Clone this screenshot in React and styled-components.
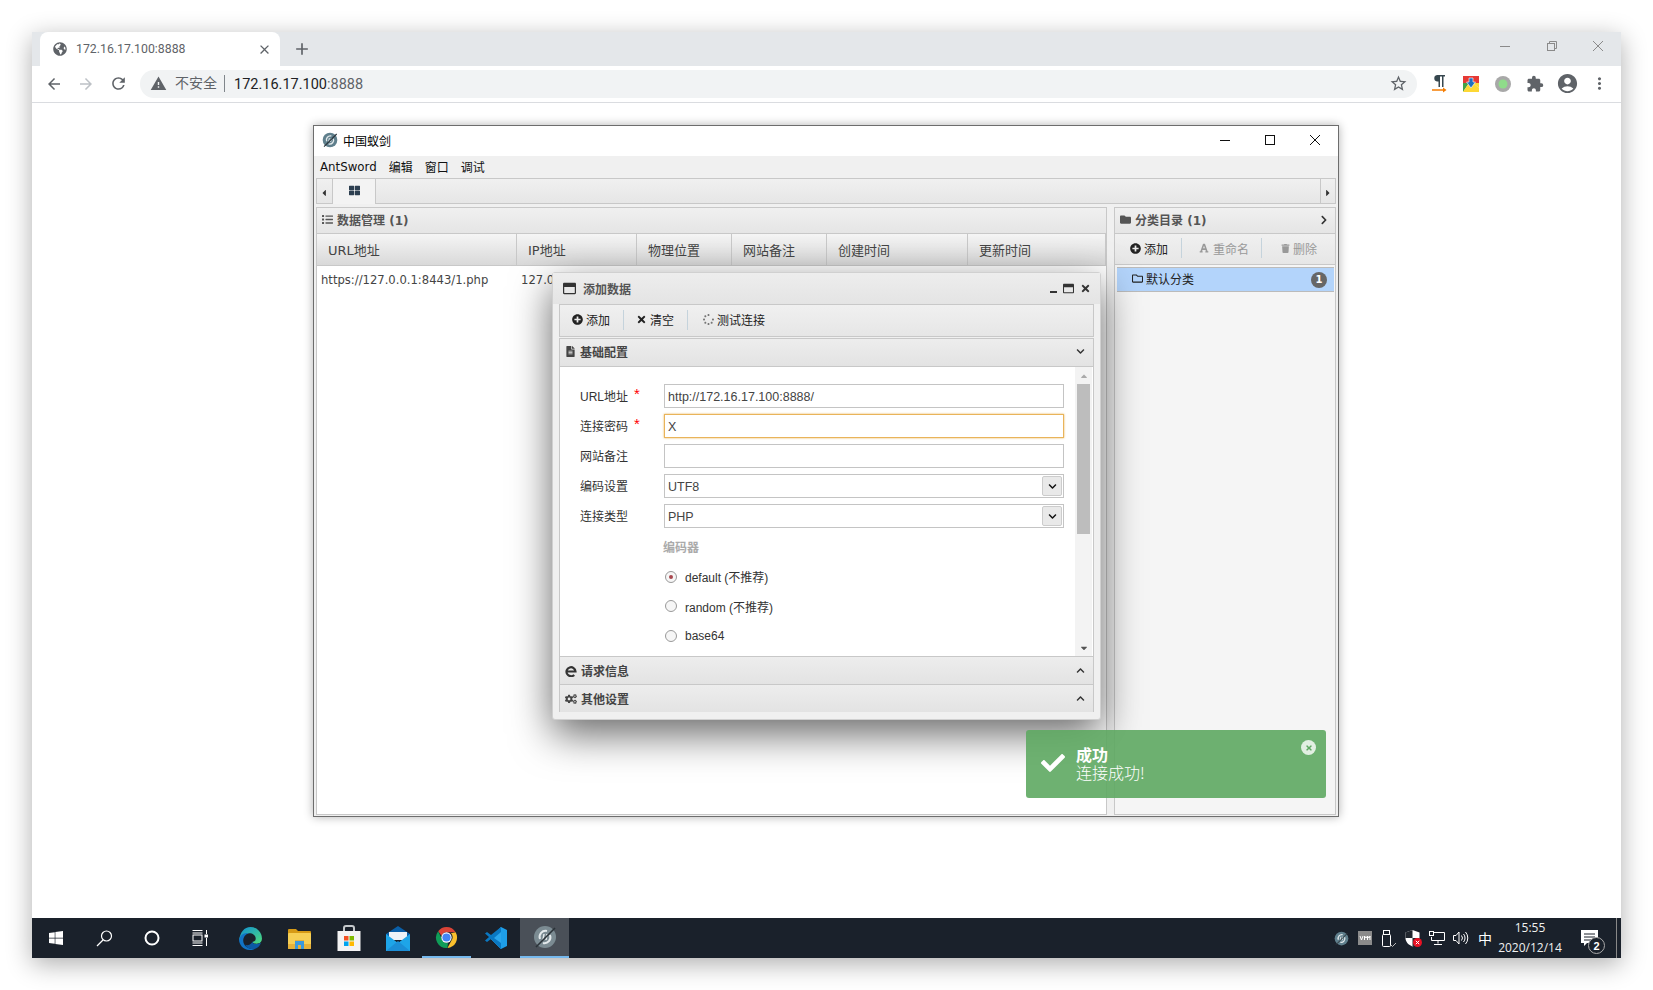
import React from 'react'
import styled, { createGlobalStyle } from 'styled-components'
import {
  FaPlusCircle, FaTimes, FaSpinner, FaFileAlt, FaChevronDown, FaChevronUp, FaChevronRight,
  FaCogs, FaThLarge, FaList, FaFolder, FaRegFolder, FaFont, FaTrash,
  FaCheck, FaCaretLeft, FaCaretRight, FaCaretUp, FaCaretDown, FaRegWindowMaximize, FaWindows,
  FaGlobeAmericas,
} from 'react-icons/fa'
import {
  MdArrowBack, MdArrowForward, MdRefresh, MdWarning, MdStarBorder, MdExtension,
  MdAccountCircle, MdMoreVert, MdClose, MdAdd,
} from 'react-icons/md'

const UI = '"DejaVu Sans", "Noto Sans CJK SC", sans-serif'
const CHROME = 'Roboto, "Noto Sans CJK SC", sans-serif'

const GlobalStyle = createGlobalStyle`
  html, body { margin: 0; padding: 0; background: #fff; overflow: hidden; }
  * { box-sizing: border-box; }
`

const Page = styled.div`
  width: 1653px;
  height: 990px;
  padding: 32px 0 0 32px;
`
const Browser = styled.div`
  width: 1589px;
  height: 926px;
  display: flex;
  flex-direction: column;
  background: #fff;
  box-shadow: 0 6px 24px rgba(0, 0, 0, 0.32);
`
const TabStrip = styled.div`
  height: 34px;
  flex: none;
  display: flex;
  align-items: flex-end;
  background: #e4e7ea;
  padding-left: 8px;
  color: #5f6368;
  font-family: ${CHROME};
`
const Tab = styled.div`
  width: 240px;
  height: 34px;
  background: #fff;
  border-radius: 8px 8px 0 0;
  display: flex;
  align-items: center;
  padding: 0 8px 0 13px;
  font-size: 12.3px;
  color: #5f6368;
`
const TabTitle = styled.span`
  flex: 1;
  margin-left: 9px;
`
const NewTab = styled.div`
  display: flex;
  width: 44px;
  height: 34px;
  align-items: center;
  justify-content: center;
`
const WinButtons = styled.div`
  margin-left: auto;
  height: 34px;
  display: flex;
  align-items: flex-start;
  padding: 9px 18px 0 0;
  gap: 36.5px;
`
const Toolbar = styled.div`
  height: 37px;
  flex: none;
  display: flex;
  align-items: center;
  padding: 0 0 1px 6px;
  border-bottom: 1px solid #dadce0;
  color: #5f6368;
`
const NavBtn = styled.div`
  width: 32px;
  flex: none;
  display: flex;
  justify-content: center;
  color: ${p => (p.$off ? '#bdc1c6' : '#5f6368')};
`
const Omnibox = styled.div`
  width: 1277px;
  flex: none;
  height: 28px;
  margin-left: 6px;
  border-radius: 14px;
  background: #f1f3f4;
  display: flex;
  align-items: center;
  padding: 0 9px 0 10px;
  font-family: ${CHROME};
  font-size: 14px;
  color: #5f6368;
`
const Insecure = styled.span`
  margin-left: 8px;
  padding-right: 7px;
  border-right: 1px solid #80868b;
  line-height: 17px;
`
const Url = styled.span`
  margin-left: 9px;
  padding-top: 1px;
  color: #202124;
  flex: 1;
  font-size: 14.5px;
`
const UrlPort = styled.span`
  color: #5f6368;
`
const Extensions = styled.div`
  display: flex;
  align-items: center;
  margin-left: 6px;
`
const ExtSlot = styled.div`
  width: 32px;
  display: flex;
  justify-content: center;
  align-items: center;
`
const Viewport = styled.div`
  flex: 1;
  min-height: 0;
  padding: 22px 0 0 281px;
`

const AppWindow = styled.div`
  position: relative;
  width: 1026px;
  height: 692px;
  border: 1px solid #6d6d6d;
  background: #f0f0f0;
  display: flex;
  flex-direction: column;
  box-shadow: 0 0 9px rgba(0, 0, 0, 0.3);
  font-family: ${UI};
  font-size: 12px;
  color: #333;
`
const TitleBar = styled.div`
  height: 30px;
  flex: none;
  background: #fff;
  display: flex;
  align-items: center;
  padding: 0 1px 2px 8px;
  color: #000;
`
const TitleText = styled.span`
  margin-left: 5px;
  flex: 1;
`
const SysBtn = styled.div`
  width: 45px;
  display: flex;
  justify-content: center;
`
const MenuBar = styled.div`
  height: 22px;
  flex: none;
  display: flex;
  align-items: center;
  gap: 12px;
  padding: 0 0 1px 6px;
  color: #111;
`
const MenuLatin = styled.span`
  font-size: 11.8px;
`
const Workspace = styled.div`
  flex: 1;
  min-height: 0;
  display: flex;
  flex-direction: column;
  padding: 0 2px 1px 2px;
`
const TabBar = styled.div`
  height: 26px;
  flex: none;
  display: flex;
  border: 1px solid #c8c8c8;
  background: linear-gradient(#f0f0f0, #e6e6e6);
  margin-bottom: 3px;
`
const Scroller = styled.div`
  width: 15px;
  flex: none;
  display: flex;
  align-items: center;
  justify-content: center;
  padding: 3px ${p => (p.$right ? 0 : 2)}px 0 0;
  font-size: 10px;
  color: #333;
  border-left: ${p => (p.$right ? '1px solid #c8c8c8' : '0')};
  margin-left: ${p => (p.$right ? 'auto' : '0')};
`
const WorkTab = styled.div`
  width: 44px;
  height: 25px;
  background: #f3f3f3;
  border: 1px solid #c8c8c8;
  border-width: 0 1px;
  display: flex;
  align-items: flex-start;
  padding-top: 6px;
  justify-content: center;
  font-size: 11px;
  color: #2c3e50;
`
const Panels = styled.div`
  flex: 1;
  min-height: 0;
  display: flex;
`
const LeftPanel = styled.div`
  width: 791px;
  display: flex;
  flex-direction: column;
  background: #fff;
  border: 1px solid #c8c8c8;
  border-top: 0;
`
const RightPanel = styled.div`
  width: 222px;
  margin-left: 7px;
  display: flex;
  flex-direction: column;
  background: #f5f5f5;
  border: 1px solid #c8c8c8;
  border-top: 0;
`
const PanelHead = styled.div`
  height: 27px;
  flex: none;
  display: flex;
  align-items: center;
  gap: 4px;
  padding: 0 6px 2px 5px;
  font-weight: 700;
  color: #555;
  background: linear-gradient(#f0f0f0, #e5e5e5);
  border-top: 1px solid #c8c8c8;
  border-bottom: 1px solid #c8c8c8;
`
const HeadEnd = styled.span`
  margin-left: auto;
  display: flex;
  color: #333;
`
const GridHead = styled.div`
  height: 32px;
  flex: none;
  display: grid;
  grid-template-columns: 200px 120px 95px 95px 141px 1fr;
  background: linear-gradient(#f5f5f5, #d9d9d9);
  border-bottom: 1px solid #c8c8c8;
  font-size: 13px;
  color: #444;
`
const HeadCell = styled.div`
  display: flex;
  align-items: center;
  padding-left: 11px;
  border-right: 1px solid #c8c8c8;
`
const GridRow = styled.div`
  display: grid;
  grid-template-columns: 200px 120px;
  height: 27px;
  align-items: center;
  font-size: 11.6px;
  color: #444;
`
const RowCell = styled.div`
  padding-left: 4px;
  white-space: nowrap;
  overflow: hidden;
`
const BarTools = styled.div`
  height: 31px;
  flex: none;
  display: flex;
  align-items: center;
  background: linear-gradient(#f0f0f0, #e6e6e6);
  border-bottom: 1px solid #c8c8c8;
  padding: 0 0 2px ${p => p.$pad || 0}px;
`
const ToolBtn = styled.div`
  display: flex;
  align-items: center;
  gap: ${p => p.$gap || 3}px;
  color: ${p => (p.$off ? '#999' : '#222')};
  padding-right: ${p => p.$pr}px;
  margin-right: ${p => p.$mr}px;
  height: 20px;
  border-right: ${p => (p.$last ? '0' : '1px solid #c5d3dc')};
`
const CategoryRow = styled.div`
  height: 25px;
  margin: 2px 1px 0 2px;
  background: #b3d4fb;
  border: 1px solid #bbb;
  border-width: 1px 0;
  display: flex;
  align-items: center;
  padding: 0 7px 2px 15px;
  gap: 3px;
  color: #222;
`
const Badge = styled.span`
  margin: 2px 0 0 auto;
  width: 16px;
  height: 16px;
  border-radius: 50%;
  background: #666;
  color: #fff;
  font-size: 10px;
  font-weight: 700;
  display: flex;
  align-items: center;
  justify-content: center;
`

const Dialog = styled.div`
  position: absolute;
  left: 238px;
  top: 146px;
  width: 549px;
  height: 448px;
  border: 1px solid #d0d0d0;
  border-radius: 3px;
  background: #f0f0f0;
  display: flex;
  flex-direction: column;
  padding: 0 6px 7px;
  box-shadow: 0 14px 40px rgba(0, 0, 0, 0.6);
`
const DialogTitle = styled.div`
  height: 31px;
  flex: none;
  margin: 0 -6px;
  padding: 0 9px 0 10px;
  display: flex;
  align-items: center;
  color: #555;
  font-weight: 700;
  background: linear-gradient(#ededed, #e4e4e4);
`
const DialogName = styled.span`
  margin-left: 7px;
  flex: 1;
`
const DialogBtns = styled.div`
  display: flex;
  align-items: center;
  gap: 6px;
  color: #333;
`
const MinBar = styled.span`
  width: 7px;
  height: 2px;
  margin-top: 6px;
  background: #333;
`
const DialogTools = styled(BarTools)`
  height: 33px;
  flex: none;
  border: 1px solid #c8c8c8;
  margin-bottom: 1px;
  padding-left: 12px;
`
const Accordion = styled.div`
  flex: 1;
  min-height: 0;
  display: flex;
  flex-direction: column;
  border: 1px solid #c8c8c8;
  border-top: 0;
  background: #fff;
`
const AccHead = styled.div`
  height: 28px;
  flex: none;
  display: flex;
  align-items: center;
  gap: 4px;
  padding: 0 8px ${p => (p.$low ? 0 : 2)}px 5px;
  color: #444;
  font-weight: 700;
  background: linear-gradient(#ededed, #e3e3e3);
  border-top: 1px solid #c8c8c8;
`
const AccBody = styled.div`
  height: 290px;
  flex: none;
  display: flex;
  border-top: 1px solid #c8c8c8;
`
const FormArea = styled.div`
  flex: 1;
  display: flex;
  flex-direction: column;
  gap: 6px;
  padding: 17px 11px 0 20px;
`
const FormRow = styled.div`
  display: grid;
  grid-template-columns: 84px 1fr;
  height: 24px;
  align-items: center;
`
const Label = styled.div`
  color: #333;
  display: flex;
  padding-bottom: 2px;
  font-family: "Liberation Sans", "Noto Sans CJK SC", sans-serif;
`
const Star = styled.span`
  color: #f00;
  margin-left: 6px;
  font-size: 15px;
  line-height: 14px;
`
const Field = styled.div`
  height: 24px;
  display: flex;
  align-items: center;
  padding: 1px 0 0 3px;
  border: 1px solid ${p => (p.$focus ? '#e9b45a' : '#c4c4c4')};
  box-shadow: ${p => (p.$focus ? '0 0 2px #e9b45a' : 'none')};
  background: #fff;
  color: #444;
  font-family: "Liberation Sans", sans-serif;
  font-size: 12.5px;
`
const SelectBtn = styled.span`
  margin: -1px 1px 0 auto;
  width: 20px;
  height: 20px;
  border: 1px solid #ccc;
  border-radius: 2px;
  background: #e9e9e9;
  display: flex;
  align-items: center;
  justify-content: center;
  font-size: 9px;
  color: #111;
`
const Group = styled.div`
  margin-left: 84px;
  display: flex;
  flex-direction: column;
`
const Legend = styled.div`
  color: #aaa;
  font-weight: 700;
  height: 20px;
  line-height: 20px;
  margin: 4px 0 4px -1px;
`
const RadioRow = styled.div`
  height: 29.5px;
  display: flex;
  align-items: center;
  gap: 8px;
  padding-left: 1px;
  font-family: "Liberation Sans", "Noto Sans CJK SC", sans-serif;
  color: #333;
`
const Radio = styled.span`
  width: 12px;
  height: 12px;
  border-radius: 50%;
  border: 1px solid #999;
  background: #f6f6f6;
  display: flex;
  align-items: center;
  justify-content: center;
  &::after {
    content: '';
    width: 4px;
    height: 4px;
    border-radius: 50%;
    background: ${p => (p.$on ? '#a8474f' : 'transparent')};
  }
`
const ScrollTrack = styled.div`
  width: 17px;
  flex: none;
  background: #f3f3f3;
  display: flex;
  flex-direction: column;
  align-items: center;
  font-size: 10px;
  color: #555;
  margin-right: 1px;
`
const ScrollArrow = styled.div`
  height: 17px;
  display: flex;
  align-items: center;
  color: ${p => (p.$dim ? '#aaa' : '#555')};
`
const ScrollThumb = styled.div`
  width: 13px;
  height: 150px;
  background: #bdbdbd;
  margin-bottom: auto;
`

const Toast = styled.div`
  position: absolute;
  left: 712px;
  top: 604px;
  width: 300px;
  height: 68px;
  border-radius: 3px;
  background: rgba(94, 168, 98, 0.9);
  color: #fff;
  display: flex;
  align-items: center;
  padding: 0 0 3px 15px;
  font-size: 16px;
  line-height: 18px;
`
const ToastText = styled.div`
  margin-left: 11px;
  font-family: "Noto Sans CJK SC", sans-serif;
  font-weight: 300;
`
const ToastTitle = styled.div`
  font-weight: 700;
`
const ToastClose = styled.span`
  position: absolute;
  right: 10px;
  top: 10px;
  width: 15px;
  height: 15px;
  border-radius: 50%;
  background: rgba(255, 255, 255, 0.8);
  color: #5ea862;
  font-size: 8px;
  display: flex;
  align-items: center;
  justify-content: center;
`

const Taskbar = styled.div`
  height: 40px;
  flex: none;
  display: flex;
  align-items: stretch;
  background: #1a212b;
  color: #fff;
`
const TaskSlot = styled.div`
  width: ${p => p.$w || 49}px;
  display: flex;
  align-items: center;
  justify-content: center;
  margin-left: ${p => p.$ml || 0}px;
  background: ${p => (p.$active ? '#4a5058' : 'transparent')};
  border-bottom: ${p => (p.$open ? '2px solid #76b9ed' : '0')};
  color: #fff;
`
const Tray = styled.div`
  margin-left: auto;
  display: flex;
  align-items: center;
  padding-right: 4px;
`
const TraySlot = styled.div`
  width: 24px;
  display: flex;
  justify-content: center;
  font-family: "Noto Sans CJK SC", sans-serif;
  font-size: 14px;
`
const Clock = styled.div`
  width: 66px;
  text-align: center;
  white-space: nowrap;
  font-family: "Open Sans", "Noto Sans CJK SC", sans-serif;
  font-size: 12px;
  line-height: 20px;
  color: #f0f0f0;
`
const Notify = styled.div`
  position: relative;
  width: 54px;
  height: 40px;
  display: flex;
  align-items: center;
  justify-content: center;
  border-right: 1px solid #888;
`
const NotifyCount = styled.span`
  position: absolute;
  left: 25px;
  top: 19px;
  width: 17px;
  height: 17px;
  border-radius: 50%;
  border: 1px solid #aaa;
  background: #1a212b;
  font-family: "Liberation Sans", sans-serif;
  font-size: 11px;
  font-weight: 700;
  display: flex;
  align-items: center;
  justify-content: center;
`

const AntLogo = ({ size = 16, active }) => (
  <svg width={size} height={size} viewBox="0 0 24 24">
    <circle cx="12" cy="12" r="11" fill={active ? '#7b8b92' : '#5f7f8c'} />
    <path d="M7 14a6 6 0 0 1 7-8M17 10a6 6 0 0 1-7 8" fill="none" stroke="#e4eaec" strokeWidth="2" />
    <path d="M11 9l-1 6M14 9l-1 6" stroke="#e4eaec" strokeWidth="1.5" />
    <path d="M3 22L22 3" stroke="#2a3238" strokeWidth="1.6" />
  </svg>
)

const OldEdgeIcon = () => (
  <svg width="12" height="12" viewBox="0 0 12 12" fill="none" stroke="#333" strokeWidth="2.200">
    <path d="M1.500 6.500h9a4.500 4.500 0 1 0-1.300 3.400" />
  </svg>
)
const EdgeIcon = () => (
  <svg width="25" height="25" viewBox="0 0 24 24">
    <defs>
      <linearGradient id="edgeTop" x1="0" y1="0" x2="1" y2="1">
        <stop offset="0" stopColor="#0f8fd6" />
        <stop offset="1" stopColor="#4fdc7a" />
      </linearGradient>
    </defs>
    <path d="M12 1a11 11 0 0 1 11 11c0 3-2 5-5 5-3 0-4-1-4-2 2 0 3-1 3-3 0-3-3-5-6-5-4 0-8 3-10 7C2 6 6 1 12 1z" fill="url(#edgeTop)" />
    <path d="M1 13c1-4 5-7 9-6-3 1-5 4-5 7 0 5 5 9 11 8-2 1-3 1-5 1C5 23 1 18 1 13z" fill="#1173c5" />
    <path d="M14 15c0 2 3 3 5 2 1 0 2-1 3-1-1 3-3 5-6 6-4 1-8-1-9-4 2 1 5 0 7-3z" fill="#0c59a4" />
  </svg>
)
const ExplorerIcon = () => (
  <svg width="23" height="21" viewBox="0 0 23 21">
    <path d="M0 2a1 1 0 0 1 1-1h7l2 2h12a1 1 0 0 1 1 1v3H0z" fill="#d69a16" />
    <rect x="0" y="5" width="23" height="16" rx="1" fill="#f6cf55" />
    <path d="M0 16h7v-4h9v4h7v4a1 1 0 0 1-1 1H1a1 1 0 0 1-1-1z" fill="#e7b23a" />
    <path d="M7 21v-8h9v8h-3v-4h-3v4z" fill="#3b9ade" />
  </svg>
)
const StoreIcon = () => (
  <svg width="24" height="26" viewBox="0 0 24 26">
    <path d="M7 7V3a2 2 0 0 1 2-2h6a2 2 0 0 1 2 2v4" fill="none" stroke="#c5c9cc" strokeWidth="2" />
    <rect x="0.500" y="6" width="23" height="20" fill="#f3f3f3" />
    <rect x="7" y="11" width="4.500" height="4.500" fill="#f25022" />
    <rect x="12.500" y="11" width="4.500" height="4.500" fill="#7fba00" />
    <rect x="7" y="16.500" width="4.500" height="4.500" fill="#00a4ef" />
    <rect x="12.500" y="16.500" width="4.500" height="4.500" fill="#ffb900" />
  </svg>
)
const MailIcon = () => (
  <svg width="24" height="25" viewBox="0 0 24 25">
    <path d="M0 8l12-8 12 8v3H0z" fill="#0a5fa8" />
    <path d="M3 6h18v8H3z" fill="#eef3f7" />
    <path d="M0 8l12 9 12-9v17H0z" fill="#1ea5e8" />
    <path d="M0 25l12-10 12 10z" fill="#1b8ed6" />
  </svg>
)
const ChromeIcon = ({ size = 23 }) => (
  <svg width={size} height={size} viewBox="0 0 24 24">
    <path d="M12 1a11 11 0 0 1 9.530 5.500H12a5.500 5.500 0 0 0-5.200 3.700L3.300 5.400A11 11 0 0 1 12 1z" fill="#db4437" />
    <path d="M21.530 6.500A11 11 0 0 1 13 23l4.200-8a5.500 5.500 0 0 0-.6-7.500z" fill="#fbc02d" />
    <path d="M13 23A11 11 0 0 1 3.300 5.400L7.500 14a5.500 5.500 0 0 0 6 3.500z" fill="#0f9d58" />
    <circle cx="12" cy="12" r="5.400" fill="#fff" />
    <circle cx="12" cy="12" r="4.300" fill="#4285f4" />
  </svg>
)
const CodeIcon = () => (
  <svg width="24" height="24" viewBox="0 0 24 24">
    <path d="M17 1l6 3v16l-6 3-10-10z" fill="#1e9ee8" />
    <path d="M17 1v22L7 13z" fill="#2aa6ec" />
    <path d="M7 13l-4 3-2-1.500L5 11 1 7.500 3 6l4 3 10-8v5l-7 6 7 5v6z" fill="#0a78c2" />
  </svg>
)
const TaskView = () => (
  <svg width="16" height="16" viewBox="0 0 16 16" fill="none" stroke="#fff" strokeWidth="1">
    <path d="M0.500 0.500h10M0.500 15.500h10M0.500 3h10M0.500 13h10" />
    <rect x="1" y="5" width="9" height="6" />
    <path d="M14.500 0v4M14.500 8v8" />
    <rect x="13" y="5" width="3" height="2" fill="#fff" />
  </svg>
)
const SearchGlass = () => (
  <svg width="17" height="17" viewBox="0 0 17 17" fill="none" stroke="#fff" strokeWidth="1.200">
    <circle cx="10.500" cy="6" r="5" />
    <path d="M7 10L1 16" />
  </svg>
)
const Cortana = () => (
  <svg width="16" height="16" viewBox="0 0 16 16" fill="none" stroke="#fff" strokeWidth="2">
    <circle cx="8" cy="8" r="6.500" />
  </svg>
)
const Pilcrow = () => (
  <svg width="16" height="20" viewBox="0 0 16 20">
    <path d="M6 1h8v1.500h-1.500V13H11V2.500H9V13H7.500V7.500H6a3.300 3.300 0 0 1 0-6.500z" fill="#37474f" />
    <path d="M1 16h12" stroke="#f57c00" strokeWidth="1.500" />
    <path d="M12 13.500L15.500 16 12 18.500z" fill="#f57c00" />
  </svg>
)
const ColorExt = () => (
  <svg width="16" height="16" viewBox="0 0 16 16">
    <rect width="16" height="7" fill="#e53935" />
    <path d="M0 7h6L0 16z" fill="#43a047" />
    <path d="M0 16L6 7h4l6 5v4z" fill="#fdd835" />
    <path d="M10 7h6v5z" fill="#fdd835" />
    <path d="M6 2h4v4h2.500L8 12 3.500 6H6z" fill="#1e6fc0" stroke="#fff" strokeWidth="0.600" />
  </svg>
)
const DotExt = () => (
  <svg width="16" height="16" viewBox="0 0 16 16">
    <circle cx="8" cy="8" r="8" fill="#a8a8a8" />
    <circle cx="8" cy="8" r="4.500" fill="#8fdc8a" />
  </svg>
)
const MinLine = ({ c }) => (
  <svg width="10" height="10" viewBox="0 0 10 10"><path d="M0 5.500h10" stroke={c} /></svg>
)
const RestoreIcon = () => (
  <svg width="10" height="10" viewBox="0 0 10 10" fill="none" stroke="#8a8a8a">
    <rect x="0.500" y="2.500" width="7" height="7" />
    <path d="M2.500 2.500v-2h7v7h-2" />
  </svg>
)
const MaxIcon = () => (
  <svg width="10" height="10" viewBox="0 0 10 10" fill="none" stroke="#111">
    <rect x="0.500" y="0.500" width="9" height="9" />
  </svg>
)
const CrossIcon = ({ c }) => (
  <svg width="10" height="10" viewBox="0 0 10 10" fill="none" stroke={c}>
    <path d="M0 0l10 10M10 0L0 10" />
  </svg>
)
const VmIcon = () => (
  <svg width="14" height="14" viewBox="0 0 14 14">
    <rect width="14" height="14" fill="#8b8b8b" />
    <path d="M2 5l1.500 4L5 5M6.500 9V5l1.500 2 1.500-2v4M9.500 5l1.500 2 1-2v4" fill="none" stroke="#fff" />
  </svg>
)
const UsbIcon = () => (
  <svg width="14" height="17" viewBox="0 0 14 17" fill="none" stroke="#fff">
    <rect x="1.500" y="0.500" width="6" height="4" />
    <rect x="0.500" y="4.500" width="8" height="12" rx="1" />
    <path d="M9 15l1.500 1.500L14 13" stroke="#bbb" />
  </svg>
)
const ShieldIcon = () => (
  <svg width="17" height="17" viewBox="0 0 17 17">
    <path d="M7.500 0l7 2.500V8c0 4-3 7-7 8.500C3.500 15 .5 12 .5 8V2.500z" fill="#fff" />
    <path d="M7.500 0v8H.5V2.500zM7.500 8h7c0 4-3 7-7 8.500z" fill="#20262e" />
    <circle cx="12.500" cy="12.500" r="4.500" fill="#e81123" />
    <path d="M10.800 10.800l3.400 3.400M14.200 10.800l-3.400 3.400" stroke="#fff" />
  </svg>
)
const NetIcon = () => (
  <svg width="16" height="14" viewBox="0 0 16 14" fill="none" stroke="#fff">
    <path d="M4 1.500h11.500v8H2.500V6M9 9.500v3M5 13.500h8" />
    <rect x="0.500" y="0.500" width="4" height="4" />
  </svg>
)
const SoundIcon = () => (
  <svg width="16" height="14" viewBox="0 0 16 14" fill="none" stroke="#fff">
    <path d="M0.500 4.500h2.500l3-3.500v12l-3-3.500H.5z" />
    <path d="M8.500 4.500a4 4 0 0 1 0 5M10.500 3a6 6 0 0 1 0 8M12.500 1a9 9 0 0 1 0 12" />
  </svg>
)
const NoteIcon = () => (
  <svg width="18" height="17" viewBox="0 0 18 17">
    <path d="M0 0h17v13H6l-3 3v-3H0z" fill="#fff" />
    <path d="M3 4h11M3 7h11M3 10h7" stroke="#1a212b" />
  </svg>
)

const columns = ['URL地址', 'IP地址', '物理位置', '网站备注', '创建时间', '更新时间']
const fields = [
  { label: 'URL地址', star: true, value: 'http://172.16.17.100:8888/' },
  { label: '连接密码', star: true, value: 'X', focus: true },
  { label: '网站备注', value: '' },
  { label: '编码设置', value: 'UTF8', select: true },
  { label: '连接类型', value: 'PHP', select: true },
]
const encoders = [
  { name: 'default (不推荐)', on: true },
  { name: 'random (不推荐)' },
  { name: 'base64' },
]

export default function App() {
  return (
    <Page>
      <GlobalStyle />
      <Browser>
        <TabStrip>
          <Tab>
            <FaGlobeAmericas size={14} />
            <TabTitle>172.16.17.100:8888</TabTitle>
            <MdClose size={15} />
          </Tab>
          <NewTab><MdAdd size={20} /></NewTab>
          <WinButtons>
            <MinLine c="#8a8a8a" />
            <RestoreIcon />
            <CrossIcon c="#8a8a8a" />
          </WinButtons>
        </TabStrip>
        <Toolbar>
          <NavBtn><MdArrowBack size={18} /></NavBtn>
          <NavBtn $off><MdArrowForward size={18} /></NavBtn>
          <NavBtn><MdRefresh size={19} /></NavBtn>
          <Omnibox>
            <MdWarning size={17} color="#5f6368" />
            <Insecure>不安全</Insecure>
            <Url>172.16.17.100<UrlPort>:8888</UrlPort></Url>
            <MdStarBorder size={19} />
          </Omnibox>
          <Extensions>
            <ExtSlot><Pilcrow /></ExtSlot>
            <ExtSlot><ColorExt /></ExtSlot>
            <ExtSlot><DotExt /></ExtSlot>
            <ExtSlot><MdExtension size={18} color="#5f6368" /></ExtSlot>
            <ExtSlot><MdAccountCircle size={23} color="#5f6368" /></ExtSlot>
            <ExtSlot><MdMoreVert size={19} color="#5f6368" /></ExtSlot>
          </Extensions>
        </Toolbar>
        <Viewport>
          <AppWindow>
            <TitleBar>
              <AntLogo />
              <TitleText>中国蚁剑</TitleText>
              <SysBtn><MinLine c="#111" /></SysBtn>
              <SysBtn><MaxIcon /></SysBtn>
              <SysBtn><CrossIcon c="#111" /></SysBtn>
            </TitleBar>
            <MenuBar>
              <MenuLatin>AntSword</MenuLatin>
              <span>编辑</span>
              <span>窗口</span>
              <span>调试</span>
            </MenuBar>
            <Workspace>
              <TabBar>
                <Scroller><FaCaretLeft /></Scroller>
                <WorkTab><FaThLarge /></WorkTab>
                <Scroller $right><FaCaretRight /></Scroller>
              </TabBar>
              <Panels>
                <LeftPanel>
                  <PanelHead>
                    <FaList size={11} />
                    数据管理 (1)
                  </PanelHead>
                  <GridHead>
                    {columns.map(c => <HeadCell key={c}>{c}</HeadCell>)}
                  </GridHead>
                  <GridRow>
                    <RowCell>https://127.0.0.1:8443/1.php</RowCell>
                    <RowCell>127.0.0.1</RowCell>
                  </GridRow>
                </LeftPanel>
                <RightPanel>
                  <PanelHead>
                    <FaFolder size={11} />
                    分类目录 (1)
                    <HeadEnd><FaChevronRight size={10} /></HeadEnd>
                  </PanelHead>
                  <BarTools $pad={15}>
                    <ToolBtn $pr={13} $mr={17}><FaPlusCircle size={11} color="#222" />添加</ToolBtn>
                    <ToolBtn $off $gap={4} $pr={12} $mr={19}><FaFont size={10} />重命名</ToolBtn>
                    <ToolBtn $off $last $pr={0} $mr={0}><FaTrash size={9} />删除</ToolBtn>
                  </BarTools>
                  <CategoryRow>
                    <FaRegFolder size={11} />
                    默认分类
                    <Badge>1</Badge>
                  </CategoryRow>
                </RightPanel>
              </Panels>
            </Workspace>

            <Dialog>
              <DialogTitle>
                <FaRegWindowMaximize size={13} color="#333" />
                <DialogName>添加数据</DialogName>
                <DialogBtns>
                  <MinBar />
                  <FaRegWindowMaximize size={11} />
                  <FaTimes size={11} />
                </DialogBtns>
              </DialogTitle>
              <DialogTools>
                <ToolBtn $pr={13} $mr={12}><FaPlusCircle size={11} color="#222" />添加</ToolBtn>
                <ToolBtn $pr={13} $mr={15}><FaTimes size={11} />清空</ToolBtn>
                <ToolBtn $last $pr={0} $mr={0}><FaSpinner size={11} color="#777" />测试连接</ToolBtn>
              </DialogTools>
              <Accordion>
                <AccHead>
                  <FaFileAlt size={11} />
                  基础配置
                  <HeadEnd><FaChevronDown size={9} /></HeadEnd>
                </AccHead>
                <AccBody>
                  <FormArea>
                    {fields.map(f => (
                      <FormRow key={f.label}>
                        <Label>{f.label}{f.star && <Star>*</Star>}</Label>
                        <Field $focus={f.focus}>
                          {f.value}
                          {f.select && <SelectBtn><FaChevronDown /></SelectBtn>}
                        </Field>
                      </FormRow>
                    ))}
                    <Group>
                      <Legend>编码器</Legend>
                      {encoders.map(e => (
                        <RadioRow key={e.name}>
                          <Radio $on={e.on} />
                          {e.name}
                        </RadioRow>
                      ))}
                    </Group>
                  </FormArea>
                  <ScrollTrack>
                    <ScrollArrow $dim><FaCaretUp /></ScrollArrow>
                    <ScrollThumb />
                    <ScrollArrow><FaCaretDown /></ScrollArrow>
                  </ScrollTrack>
                </AccBody>
                <AccHead $low>
                  <OldEdgeIcon />
                  请求信息
                  <HeadEnd><FaChevronUp size={9} /></HeadEnd>
                </AccHead>
                <AccHead $low>
                  <FaCogs size={12} />
                  其他设置
                  <HeadEnd><FaChevronUp size={9} /></HeadEnd>
                </AccHead>
              </Accordion>
            </Dialog>

            <Toast>
              <FaCheck size={24} />
              <ToastText>
                <ToastTitle>成功</ToastTitle>
                连接成功!
              </ToastText>
              <ToastClose><FaTimes /></ToastClose>
            </Toast>
          </AppWindow>
        </Viewport>
        <Taskbar>
          <TaskSlot $w={48}><FaWindows size={16} /></TaskSlot>
          <TaskSlot $w={48}><SearchGlass /></TaskSlot>
          <TaskSlot $w={48}><Cortana /></TaskSlot>
          <TaskSlot $w={48}><TaskView /></TaskSlot>
          <TaskSlot $ml={2}><EdgeIcon /></TaskSlot>
          <TaskSlot><ExplorerIcon /></TaskSlot>
          <TaskSlot><StoreIcon /></TaskSlot>
          <TaskSlot><MailIcon /></TaskSlot>
          <TaskSlot $open><ChromeIcon /></TaskSlot>
          <TaskSlot><CodeIcon /></TaskSlot>
          <TaskSlot $open $active><AntLogo size={24} active /></TaskSlot>
          <Tray>
            <TraySlot><AntLogo size={15} /></TraySlot>
            <TraySlot><VmIcon /></TraySlot>
            <TraySlot><UsbIcon /></TraySlot>
            <TraySlot><ShieldIcon /></TraySlot>
            <TraySlot><NetIcon /></TraySlot>
            <TraySlot><SoundIcon /></TraySlot>
            <TraySlot>中</TraySlot>
            <Clock>15:55<br />2020/12/14</Clock>
            <Notify>
              <NoteIcon />
              <NotifyCount>2</NotifyCount>
            </Notify>
          </Tray>
        </Taskbar>
      </Browser>
    </Page>
  )
}
